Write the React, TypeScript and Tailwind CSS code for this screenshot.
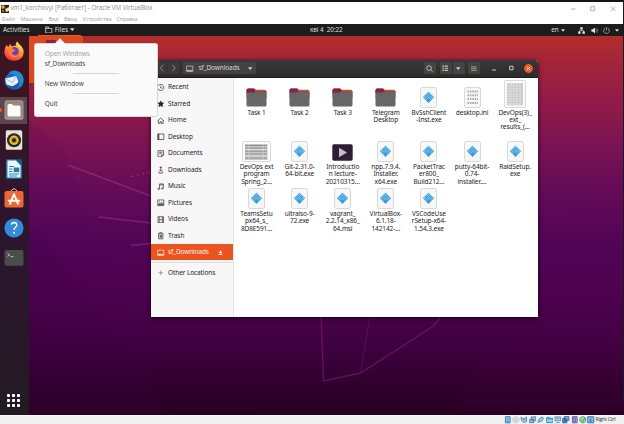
import type { ReactNode } from "react";

const UI = "font-['Noto_Sans','Open_Sans',sans-serif]";

function Caret({ className = "h-[3.2px] w-[5px]" }: { className?: string }) {
  return (
    <svg viewBox="0 0 6 4" className={`shrink-0 ${className}`} fill="currentColor">
      <path d="M0 .2h6L3 4z" />
    </svg>
  );
}

function HostTitle() {
  return (
    <div className="h-[24px] w-full shrink-0 border-t-2 border-[#15131a] bg-white font-['Open_Sans','Noto_Sans',sans-serif]">
      <div className="flex h-[12px] items-center pt-[1px] pl-[1px]">
        <svg viewBox="0 0 8 8" className="mt-[1px] h-[8px] w-[8px]">
          <rect width="8" height="8" fill="#2c2118" />
          <path d="M0 1l3-1 1 3-3 1z" fill="#e9a13a" />
          <path d="M4 4l4-2v4L5 7z" fill="#f2d9a2" />
          <path d="M1 5h2v2H1z" fill="#b5682a" />
        </svg>
        <span className="ml-[1.5px] text-[6.2px] leading-none tracking-[0px] whitespace-pre text-[#8d8d8d]">
          vm1_korchovyi [Работает] - Oracle VM VirtualBox
        </span>
        <svg viewBox="0 0 48 8" className="mr-[7px] ml-auto h-[8px] w-[48px]" fill="none" stroke="#929292" strokeWidth=".7">
          <path d="M2 4h4.500M21.700 1.700h4v4h-4zM42 1.500l4.500 4.500M46.500 1.500l-4.500 4.500" />
        </svg>
      </div>
      <div className="flex h-[10px] items-center gap-[7px] pt-[1px] pl-[1.5px] text-[5.4px] leading-none tracking-[-0.05px] text-[#a0a0a0]">
        <span className="w-[12px]">Файл</span>
        <span className="w-[21px]">Машина</span>
        <span className="w-[8.5px]">Вид</span>
        <span className="w-[11.5px]">Ввод</span>
        <span className="w-[27px]">Устройства</span>
        <span className="tracking-[-0.15px]">Справка</span>
      </div>
    </div>
  );
}

function TopBar() {
  return (
    <div className="flex h-[12px] w-full shrink-0 items-stretch bg-[#1c1c1c] text-[6.4px] leading-[12px] text-[#dedede]">
      <span className="w-[38px] pl-[3px] tracking-[-0.02px]">Activities</span>
      <div className="flex w-[43px] items-center border-b border-[#e95420] pl-[7px]">
        <svg viewBox="0 0 8 8" className="h-[7.5px] w-[7.5px]" fill="none" stroke="#dedede" strokeWidth=".8">
          <path d="M.7 1h3v1.600h3.600v4.800H.7zM.7 2.600h3" />
        </svg>
        <span className="ml-[2.3px]">Files</span>
        <Caret className="ml-[2.2px] h-[3.2px] w-[4.5px]" />
      </div>
      <span className="ml-[229px] w-[40px] tracking-[-0.08px] whitespace-pre">кві 4  20:22</span>
      <div className="mr-[5.5px] ml-auto flex items-center">
        <span className="text-[6.4px] tracking-[-0.1px]">en</span>
        <Caret className="ml-[2px] h-[3px] w-[4px]" />
        <svg viewBox="0 0 8 8" className="ml-[13px] h-[7px] w-[7px]" fill="#e2e2e2" stroke="#e2e2e2" strokeWidth=".7">
          <path d="M3 .5h2v2H3zM.5 5.500h2v2h-2zM5.500 5.500h2v2h-2z" />
          <path d="M4 2v2.200M1.500 6V4.200h5V6" fill="none" />
        </svg>
        <svg viewBox="0 0 8 8" className="ml-[6px] h-[7px] w-[7px]" fill="#e2e2e2">
          <path d="M.5 2.700h1.700L4.600.6v6.800L2.200 5.300H.5z" />
          <path d="M5.500 2.300q1.300 1.700 0 3.400M6.500 1.200q2 2.800 0 5.600" fill="none" stroke="#999" strokeWidth=".7" />
        </svg>
        <svg viewBox="0 0 8 8" className="ml-[5px] h-[7px] w-[7px]" fill="none" stroke="#c5c5c5" strokeWidth=".8">
          <path d="M2.600 1.200a3.200 3.200 0 1 0 2.800 0M4 .3v3.500" />
        </svg>
        <Caret className="ml-[5px] h-[3px] w-[4px]" />
      </div>
    </div>
  );
}

function Wallpaper() {
  return (
    <svg viewBox="0 36 624 379" preserveAspectRatio="none" className="absolute inset-0 h-full w-full">
      <defs>
        <linearGradient id="wall" x1="0" y1="0" x2="0" y2="1">
          <stop offset="0" stopColor="#b22d2a" />
          <stop offset=".07" stopColor="#a3243a" />
          <stop offset=".16" stopColor="#941d47" />
          <stop offset=".28" stopColor="#7d1452" />
          <stop offset=".4" stopColor="#650c58" />
          <stop offset=".55" stopColor="#500555" />
          <stop offset=".68" stopColor="#4c034e" />
          <stop offset=".8" stopColor="#410142" />
          <stop offset=".92" stopColor="#30002f" />
          <stop offset="1" stopColor="#280020" />
        </linearGradient>
      </defs>
      <rect y="36" width="624" height="379" fill="url(#wall)" />
      <path d="M29 120l33 25 55 145 50 125H29z" fill="#4a0058" opacity=".1" />
      <path d="M29 220l150 195H29z" fill="#300030" opacity=".08" />
      <path d="M538 260l86-110v265H450z" fill="#700060" opacity=".05" />
      <g fill="none" stroke="#a03a86" opacity=".5">
        <path d="M68 165l83 31" strokeWidth="1.800" />
        <path d="M99 217l52 6M131 245.500l20-2" strokeWidth="1.600" />
        <path d="M321 316l2.500 65 37-8 73-47 8-10" stroke="#91207f" strokeWidth="1.400" />
        <path d="M370 316l-9.500 57" stroke="#91207f" strokeWidth=".7" />
      </g>
      <g fill="#b65f9f" opacity=".8">
        <circle cx="131.500" cy="176.200" r=".8" />
        <circle cx="137.500" cy="174.900" r=".7" />
        <circle cx="143.500" cy="173.600" r=".7" />
        <circle cx="149" cy="172.400" r=".7" />
      </g>
    </svg>
  );
}

function DockSlot({ children, active }: { children: ReactNode; active?: boolean }) {
  return (
    <div className={`relative flex h-[27px] w-[27px] items-center justify-center ${active ? "bg-white/20" : ""}`}>
      {active && <span className="absolute top-[11.5px] -left-[1.5px] h-[3.5px] w-[3.5px] rounded-full bg-[#e95420]" />}
      {children}
    </div>
  );
}

function Dock() {
  return (
    <div className="relative flex h-full w-[29px] shrink-0 flex-col gap-[2.7px] bg-gradient-to-b from-[#3d151d] via-[#2d1530] to-[#221a22] pt-[1.2px]">
      <DockSlot>
        <svg viewBox="0 0 20 20" className="h-[20px] w-[20px]">
          <defs>
            <linearGradient id="fox" x1=".8" y1="0" x2=".3" y2="1">
              <stop offset="0" stopColor="#ffe34d" />
              <stop offset=".45" stopColor="#ff9630" />
              <stop offset="1" stopColor="#f5284e" />
            </linearGradient>
          </defs>
          <path d="M2.600 4l1.800 2 2-3.500.6 2.800Q9 4.500 11.500 5 11 2 13.500.3q.5 2.200 2.500 3.700 3.800 3 3.700 7.500-.5 7.500-9 8.300Q1.500 20 .3 11.500.2 7 2.600 4z" fill="url(#fox)" />
          <circle cx="10.200" cy="10.500" r="4.500" fill="#7139c6" />
          <path d="M4 8q3-2.500 6 .5l1.500 1.300-3 1.200q-1 2.400 1.800 3.300 2.700.4 4.600-1.800-.7 4-4.800 4.300Q4.500 16.500 4 8z" fill="#ff7b2e" />
          <path d="M13 4q4 2.500 4 7 1.500-4-1.500-7.500z" fill="#ffd94a" />
        </svg>
      </DockSlot>
      <DockSlot>
        <svg viewBox="0 0 20 20" className="h-[20px] w-[20px]">
          <path d="M6 1.500q6-2.500 10.500 2Q20 7 19.700 12q-1.500 7-8 7.500-8 .5-11-6Q0 7 4.500 3.500z" fill="#1769ba" />
          <path d="M5 3q2-2.600 6-2.500 8 1 8.500 9-1 6-5 8 2-6-1-10Q10 3.500 5 3z" fill="#2b87d3" />
          <path d="M1 8.500L12 6l3 6.500-6.500 4-6-2z" fill="#e7f0f8" />
          <path d="M1.200 8.800l7.500 3.700L12.200 6.500" fill="none" stroke="#9fb9d6" strokeWidth=".9" />
          <path d="M1.500 14q4.500 3.500 9 1.500 4-2 5-6 1 8-5 9.500-6 1-9-5z" fill="#1e5aa5" />
        </svg>
      </DockSlot>
      <DockSlot active>
        <svg viewBox="0 0 20 20" className="h-[20px] w-[20px]">
          <rect x=".5" y=".3" width="19" height="19.400" rx="2.500" fill="#a49d8d" />
          <rect x="1.300" y="1" width="17.400" height="16.500" rx="2" fill="#938c7d" />
          <path d="M3.500 5.500q0-1.500 1.500-1.500h3l1 1.400h6q1.500 0 1.500 1.500V15q0 1.500-1.500 1.500H5q-1.500 0-1.500-1.500z" fill="#fbfaf5" />
        </svg>
      </DockSlot>
      <DockSlot>
        <svg viewBox="0 0 18 20" className="h-[20px] w-[18px]">
          <rect x=".8" y=".2" width="16.400" height="19.600" rx="1.600" fill="#e9e3d9" />
          <circle cx="9" cy="10.200" r="7" fill="#272727" />
          <circle cx="9" cy="10.200" r="4.700" fill="#f4c62e" />
          <circle cx="9" cy="10.200" r="3.200" fill="#c99b1d" />
          <circle cx="9" cy="10.200" r="2" fill="#222" />
        </svg>
      </DockSlot>
      <DockSlot>
        <svg viewBox="0 0 18 20" className="h-[20px] w-[18px]">
          <path d="M2 .3h9.500L17 6v12.500q0 1.200-1.200 1.200H2.200Q1 19.700 1 18.500V1.500Q1 .3 2 .3z" fill="#1a75a8" />
          <path d="M2.500 1.500H11l4.500 5v12h-13z" fill="#eff8fc" />
          <path d="M11 .2h6V6z" fill="#165b83" />
          <path d="M4 7.500h5M4 10h3.500M4 12.500h3.500M4 15h10M4 17h8" stroke="#2685b5" strokeWidth="1.100" />
          <rect x="8.700" y="8.500" width="5.500" height="4.700" fill="#2579a5" />
        </svg>
      </DockSlot>
      <DockSlot>
        <svg viewBox="0 0 20 20" className="-mt-[2px] h-[20px] w-[20px]">
          <path d="M7 4.500V3q3-4.500 6 0v1.500" fill="none" stroke="#e3d7cb" strokeWidth="1" />
          <rect x=".5" y="3" width="19" height="16.500" rx="2" fill="#ee6634" />
          <path d="M6 15.800l4-9.800 4 9.800M4.700 12.800h10.600" fill="none" stroke="#fff" strokeWidth="1.900" strokeLinecap="round" strokeLinejoin="round" />
        </svg>
      </DockSlot>
      <DockSlot>
        <svg viewBox="0 0 20 20" className="-mt-[1px] h-[20px] w-[20px]">
          <circle cx="10" cy="10" r="9.600" fill="#338cd5" />
          <path d="M7.300 6.700q.3-2.200 2.900-2.200 2.500.2 2.600 2.300 0 1.500-1.500 2.600-1.200.9-1.200 2.600" fill="none" stroke="#fff" strokeWidth="1.300" />
          <circle cx="10.100" cy="14.800" r=".95" fill="#fff" />
        </svg>
      </DockSlot>
      <DockSlot>
        <svg viewBox="0 0 20 16" className="-mt-[1px] h-[16px] w-[20px]">
          <rect x=".5" width="19" height="15.800" rx="1.800" fill="#4c4d4b" />
          <path d="M3.500 3.500l2.200 1.400-2.200 1.400M6.500 6.700h3" fill="none" stroke="#ddd" strokeWidth=".8" />
        </svg>
      </DockSlot>
      <div className="mt-auto mb-[7.8px] ml-[6.8px] grid w-[13.4px] grid-cols-3 gap-[2.3px]">
        {Array.from({ length: 9 }, (_, i) => (
          <span key={i} className="h-[2.9px] w-[2.9px] rounded-[0.8px] bg-white" />
        ))}
      </div>
    </div>
  );
}

function SideIcon({ d, filled }: { d: string; filled?: boolean }) {
  return (
    <svg viewBox="0 0 8 8" className="h-[7.5px] w-[7.5px] shrink-0" fill={filled ? "currentColor" : "none"} stroke="currentColor" strokeWidth=".7">
      <path d={d} />
    </svg>
  );
}

const places: { name: string; d: string; filled?: boolean }[] = [
  { name: "Recent", d: "M1.500 1.600A3.300 3.300 0 1 1 .7 4M.7 2l1-.8M4 2v2.300h1.700" },
  { name: "Starred", d: "M4 1l.9 2 2.200.3-1.600 1.500.4 2.200L4 6 2.100 7l.4-2.200L.9 3.300 3.100 3z", filled: true },
  { name: "Home", d: "M.6 4.200L4 .9l3.400 3.300M1.500 3.500v3.700h1.700V5h1.600v2.200h1.700V3.500" },
  { name: "Desktop", d: "M.7 1h6.600v6H.7zM1.600 1v6M2 1v6" },
  { name: "Documents", d: "M1 .7h6v4.600L5.200 7.300H1zM2.300 2.400h3.400M2.300 4h3M7 5.200H5v2" },
  { name: "Downloads", d: "M4 .5v4.800M2.300 3.800L4 5.500l1.700-1.700M2.200 5.800v1.700h3.600V5.800M2.700 1.500h2.600" },
  { name: "Music", d: "M2.700 6V1h4v4.500M2.700 2h4M2.700 6q0 1-1 1t-1-.7 2-.7M6.700 5.500q0 1-1 1t-1-.7 2-.7" },
  { name: "Pictures", d: "M.8 1h6.400v6H.8zM1 6.500l2-2.300 1 .9 1.200-1.700L7 6.500M2.300 2.500h.8M2 5.600h4M1.800 6.200h4.700" },
  { name: "Videos", d: "M1 .8h6v6.400H1zM2.300.800v6.400M5.700.800v6.400M2.300 4h3.400" },
  { name: "Trash", d: "M.9 2h6.200M2.800 1.900V.7h2.400v1.200M1.600 2.300l.2 5.100h4.400l.2-5.100M3.200 3.200v3M4.800 3.200v3M4 3.200v3" },
];

const driveIcon = "M.7 1.200h6.600v5.600H.7zM1 5.700h6M1 6.200h6";

type Kind = "folder" | "exe" | "video" | "text" | "tall" | "wide";

function FileGlyph({ kind }: { kind: Kind }) {
  if (kind === "folder")
    return (
      <svg viewBox="0 0 21 19" className="h-[19px] w-[21px]">
        <path d="M.5 2.500Q.5.500 2 .5h6l1.300 1.300h9.200q2 0 2 2V10H.5z" fill="#d64c2d" />
        <path d="M.5 5V2.200Q.5.400 2.200.4H8l1.500 1.400-1 2.700z" fill="#87204a" />
        <path d="M.5 4.500h7.300L9.200 3.400h11.300V17q0 1.600-1.500 1.600H2q-1.500 0-1.500-1.600z" fill="#676767" />
        <path d="M.5 4.700h7.300L9.200 3.700h11.300" fill="none" stroke="#565256" strokeWidth=".5" />
      </svg>
    );
  if (kind === "video")
    return (
      <svg viewBox="0 0 21 17" className="h-[17px] w-[21px]">
        <rect x=".3" y=".3" width="20.400" height="16.400" rx="1.600" fill="#2d1d35" />
        <path d="M7 3.800l8 4.700-8 4.700z" fill="#c5bcc8" />
      </svg>
    );
  if (kind === "tall")
    return (
      <svg viewBox="0 0 22 28" className="h-[28px] w-[22px]">
        <rect x=".5" y=".5" width="21" height="27" rx="1" fill="#fbfbfb" stroke="#c9c9c9" strokeWidth=".7" />
        <rect x="3" y="3" width="16" height="22.500" fill="#d0d0d0" />
        <path d="M5 3v22.500M7 3v22.500M10 3v22.500M13 3v22.500M16 3v22.500" stroke="#f1f1f1" strokeWidth=".7" />
        <path d="M3 5h16M3 7.500h16M3 10h16M3 12.500h16M3 15h16M3 17.500h16M3 20h16M3 22.500h16" stroke="#b5b5b5" strokeWidth=".4" />
      </svg>
    );
  if (kind === "wide")
    return (
      <svg viewBox="0 0 29 21" className="h-[21px] w-[29px]">
        <rect x=".5" y=".5" width="28" height="20" rx="1.500" fill="#fcfcfc" stroke="#c9c9c9" strokeWidth=".7" />
        <rect x="3" y="3" width="22.500" height="16" fill="#c6c6c6" />
        <path d="M3 4.500h22M3 7h22M3 10.200h22M3 13h22M3 17h22" stroke="#888" strokeWidth=".9" />
        <path d="M3 8.600h22M3 15h22" stroke="#e6e6e6" strokeWidth=".8" />
        <path d="M7 3v16M21 3v16" stroke="#e2e2e2" strokeWidth=".5" />
      </svg>
    );
  return (
    <svg viewBox="0 0 17 21" className="h-[21px] w-[17px]">
      <rect x=".5" y=".5" width="16" height="20" rx="1.800" fill="#f7f7f7" stroke="#cfcfcf" strokeWidth=".8" />
      {kind === "exe" ? (
        <g>
          <path d="M8.500 4.700l5.500 5.600-5.500 5.600L3 10.300z" fill="#3c9bd7" />
          <path d="M8.500 4.700l2 2-2 2-2-2zM5 8.300l2 2-2 2-2-2zM12 8.300l2 2-2 2-2-2z" fill="#64b9e8" />
          <path d="M5.700 7.600l5.600 5.500M11.300 7.600l-5.600 5.500" stroke="#b5dcf2" strokeWidth=".55" />
        </g>
      ) : (
        <g fill="none" stroke="#a6a6a6" strokeWidth="2" strokeDasharray="1.500 .9">
          <path d="M3.500 4.500h10.500M3.500 8.300h10.500M3.500 12.100h10.500M3.500 15.900h10.500" />
        </g>
      )}
    </svg>
  );
}

const rows: { className: string; box: string; files: { kind: Kind; lines: string[] }[] }[] = [
  {
    className: "h-[61px]",
    box: "h-[28.7px]",
    files: [
      { kind: "folder", lines: ["Task 1"] },
      { kind: "folder", lines: ["Task 2"] },
      { kind: "folder", lines: ["Task 3"] },
      { kind: "folder", lines: ["Telegram", "Desktop"] },
      { kind: "exe", lines: ["BvSshClient", "-Inst.exe"] },
      { kind: "text", lines: ["desktop.ini"] },
      { kind: "tall", lines: ["DevOps(3)_", "ext_", "results_(…"] },
    ],
  },
  {
    className: "h-[47px]",
    box: "h-[22px]",
    files: [
      { kind: "wide", lines: ["DevOps ext", "program", "Spring_2…"] },
      { kind: "exe", lines: ["Git-2.31.0-", "64-bit.exe"] },
      { kind: "video", lines: ["Introductio", "n lecture-", "20210315…"] },
      { kind: "exe", lines: ["npp.7.9.4.", "Installer.", "x64.exe"] },
      { kind: "exe", lines: ["PacketTrac", "er800_", "Build212…"] },
      { kind: "exe", lines: ["putty-64bit-", "0.74-", "installer.…"] },
      { kind: "exe", lines: ["RaidSetup.", "exe"] },
    ],
  },
  {
    className: "h-[47px]",
    box: "h-[22px]",
    files: [
      { kind: "exe", lines: ["TeamsSetu", "px64_s_", "8D8E591…"] },
      { kind: "exe", lines: ["ultraiso-9-", "72.exe"] },
      { kind: "exe", lines: ["vagrant_", "2.2.14_x86_", "64.msi"] },
      { kind: "exe", lines: ["VirtualBox-", "6.1.18-", "142142-…"] },
      { kind: "exe", lines: ["VSCodeUse", "rSetup-x64-", "1.54.3.exe"] },
    ],
  },
];

function glyphOffset(row: number, kind: Kind) {
  if (row === 0 && kind === "folder") return "pt-[8px]";
  if (row === 0 && kind !== "tall") return "pt-[7px]";
  if (kind === "video") return "pt-[3px]";
  return "pt-0";
}

function FilesWindow() {
  return (
    <div className="absolute top-[24px] left-[151px] flex h-[256.5px] w-[387px] flex-col overflow-hidden rounded-t-[3px] bg-white shadow-[0_1px_5px_rgba(0,0,0,0.7)]">
      <div className="flex h-[17.5px] shrink-0 items-center border-b border-[#1d1c1c] bg-gradient-to-b from-[#393737] to-[#2d2b2b] text-[#d6d6d6]">
        <div className="ml-[2px] flex h-[12px] w-[25.5px] items-center justify-around rounded-[1px] bg-[#3b3939]">
          <svg viewBox="0 0 24 8" className="h-[8px] w-[24px]" fill="none" stroke="#9b9999" strokeWidth=".8">
            <path d="M9 .8L6.500 4 9 7.200M18.500.800L21 4l-2.500 3.200" />
            <path d="M13 -2v12" stroke="#2c2a2a" />
          </svg>
        </div>
        <div className="ml-[4.5px] flex h-[12px] w-[73px] items-center rounded-[1px] bg-[#454242] pl-[3px] text-[6.5px] leading-none">
          <SideIcon d={driveIcon} />
          <span className="ml-[5px] tracking-[-0.1px]">sf_Downloads</span>
          <Caret className="mr-[4px] ml-auto h-[3px] w-[4.5px]" />
        </div>
        <div className="mr-[5.5px] ml-auto flex items-center">
          <div className="flex h-[12px] w-[12.5px] items-center justify-center rounded-[1px] bg-[#454242]">
            <svg viewBox="0 0 8 8" className="h-[7px] w-[7px]" fill="none" stroke="#d5d5d5" strokeWidth=".9">
              <circle cx="3.500" cy="3.500" r="2.700" />
              <path d="M5.500 5.500l2 2" />
            </svg>
          </div>
          <div className="ml-[3.5px] flex h-[12px] w-[25px] items-center rounded-[1px] bg-[#454242]">
            <svg viewBox="0 0 8 8" className="ml-[2.5px] h-[6.5px] w-[6.5px]" stroke="#c4c4c4" strokeWidth="1.300">
              <path d="M.5 1.400h2M.5 4h2M.5 6.600h2M3.300 1.400h4M3.300 4h4M3.300 6.600h4" />
            </svg>
            <span className="ml-[3px] h-full w-px bg-[#302e2e]" />
            <Caret className="ml-[3px] h-[3px] w-[4.5px]" />
          </div>
          <div className="ml-[3.5px] flex h-[12px] w-[12px] items-center justify-center rounded-[1px] bg-[#454242]">
            <svg viewBox="0 0 6 6" className="h-[5.5px] w-[5.5px]" stroke="#bdbdbd" strokeWidth=".8">
              <path d="M0 1h6M0 3h6M0 5h6" />
            </svg>
          </div>
          <svg viewBox="0 0 24 8" className="ml-[10.5px] h-[8px] w-[24px]" fill="none" stroke="#dcdcdc" strokeWidth=".9">
            <path d="M1 6h4M18.700 2.200h3.300v3.500h-3.300z" />
          </svg>
          <svg viewBox="0 0 10 10" className="ml-[9px] h-[9px] w-[9px]">
            <circle cx="5" cy="5" r="4.900" fill="#ed5b2a" />
            <path d="M3.200 3.200l3.600 3.600M6.800 3.200L3.200 6.800" stroke="#fff" strokeWidth=".9" />
          </svg>
        </div>
      </div>
      <div className="flex min-h-0 flex-1">
        <div className="w-[82.5px] shrink-0 border-r border-[#e4e4e4] bg-[#f7f7f7] text-[6.5px] leading-none tracking-[-0.05px] text-[#262626]">
          <div className="pt-[1.7px]">
            {places.map((p) => (
              <div key={p.name} className="flex h-[16.5px] items-center pl-[6px]">
                <SideIcon d={p.d} filled={p.filled} />
                <span className="ml-[3.5px]">{p.name}</span>
              </div>
            ))}
          </div>
          <div className="flex h-[16px] items-center bg-[#e95420] pt-[0.5px] pl-[6px] text-white/90">
            <SideIcon d={driveIcon} />
            <span className="ml-[3.5px] tracking-[-0.12px]">sf_Downloads</span>
            <svg viewBox="0 0 6 6" className="mr-[9.5px] ml-auto h-[5px] w-[5px]" fill="#fff">
              <path d="M3 .3L5.300 4H.7zM.7 4.700h4.600v1H.7z" />
            </svg>
          </div>
          <div className="mt-[1.5px] h-px bg-[#ecd9d0]" />
          <div className="mt-[2px] flex h-[16.5px] items-center pl-[6px]">
            <span className="text-[#777]">
              <SideIcon d="M1.500 4h5M4 1.500v5" />
            </span>
            <span className="ml-[3.5px] tracking-[-0.1px]">Other Locations</span>
          </div>
        </div>
        <div className="flex flex-1 flex-col pt-[2.5px] pl-[1.5px]">
          {rows.map((row, i) => (
            <div key={i} className={`flex ${row.className}`}>
              {row.files.map((f) => (
                <div key={f.lines[0]} className="flex w-[43.1px] shrink-0 flex-col items-center">
                  <div className={`flex shrink-0 flex-col items-center ${row.box} ${glyphOffset(i, f.kind)}`}>
                    <FileGlyph kind={f.kind} />
                  </div>
                  {f.lines.map((l) => (
                    <span key={l} className="h-[7.4px] text-[6.5px] leading-[7.4px] tracking-[-0.1px] whitespace-pre text-[#1c1c1c]">
                      {l}
                    </span>
                  ))}
                </div>
              ))}
            </div>
          ))}
        </div>
      </div>
    </div>
  );
}

function AppMenu() {
  return (
    <div className="absolute top-[6.5px] left-[34px] h-[74px] w-[124px] rounded-[2.5px] border border-[#d9d4d4] bg-[#fafafa] px-[9.8px] pt-[5.4px] text-[6.4px] leading-[10px] tracking-[-0.03px] text-[#454545]">
      <svg viewBox="0 0 14 7" className="absolute -top-[6px] left-[18px] h-[7px] w-[14px]" fill="#fafafa">
        <path d="M7 .3l6.500 6.700H.5z" />
      </svg>
      <div className="text-[#a5a5a5]">Open Windows</div>
      <div className="tracking-[-0.1px]">sf_Downloads</div>
      <div className="mx-auto mt-[3.8px] h-px w-[46px] bg-[#d6d6d6]" />
      <div className="mt-[5px]">New Window</div>
      <div className="mx-auto mt-[4.5px] h-px w-[46px] bg-[#d6d6d6]" />
      <div className="mt-[5px]">Quit</div>
    </div>
  );
}

const statusIcons: { d: string; c: string }[] = [
  { d: "M1.500.700h5v6.600h-5zM2.500 5.500h3M4 2v2", c: "#2f80c2" },
  { d: "M4 .8a3.200 3.200 0 1 0 .1 0M4 3a1 1 0 1 0 .1 0", c: "#c3c3c3" },
  { d: "M1 1.500l3 1.500 3-2v5L4 7 2 5.500zM3 4h3", c: "#4a91bd" },
  { d: "M2.500 1h5v3.500h-5zM.700 3.500h4.500V7H.7z", c: "#397caa" },
  { d: "M1 6.500L2.500 3l3-2L7 2.500l-2 3z", c: "#368bc4" },
  { d: "M.7 1.500h3l.7 1h3V7H.7zM.7 3h6.700", c: "#238fd1" },
  { d: "M1 1h6v4H1zM2 7h4M2.500 2.500h3", c: "#5797bd" },
  { d: "M2.500.700h4.800v4H2.500zM.700 2.700h4.500v4.500H.7zM2 4h2v2H2z", c: "#275eab" },
  { d: "M1.500.700h5v6.600h-5zM3 2h2v4H3z", c: "#6256aa" },
  { d: "M4 .7a3.300 3.300 0 1 0 .1 0M2.500 4l1.500 2 2.500-4", c: "#35a45a" },
  { d: "M.8.800h6.400v6.400H.8zM4 2v4M2.500 4.500L4 6l1.500-1.500", c: "#176fb3" },
];

function StatusBar() {
  return (
    <div className="flex h-[9px] w-full shrink-0 items-center justify-end border-t border-[#fafafa] bg-[#f0f0f0]">
      <div className="flex w-[91.3px] justify-between">
        {statusIcons.map((s, i) => (
          <svg key={i} viewBox="0 0 8 8" className="h-[7.5px] w-[7.5px]" fill={s.c} fillOpacity=".35" stroke={s.c} strokeWidth="1">
            <path d={s.d} />
          </svg>
        ))}
      </div>
      <span className="mr-[5px] ml-[0.5px] w-[23.500px] font-['Open_Sans',sans-serif] text-[5.300px] leading-none tracking-[-0.300px] whitespace-nowrap text-[#333]">
        Right Ctrl
      </span>
    </div>
  );
}

export default function App() {
  return (
    <div className={`relative flex h-[424px] w-[624px] flex-col overflow-hidden bg-white ${UI}`}>
      <HostTitle />
      <TopBar />
      <div className="relative flex h-[379px] shrink-0 overflow-hidden">
        <Wallpaper />
        <Dock />
        <div className="absolute top-0 left-[29px] h-[47px] w-[54px] rounded-br-[1px] bg-[#dc4a20]">
          <span className="absolute top-[4px] left-[17px] h-[6px] w-[10px] rounded-[1px] bg-[#8b2052]" />
        </div>
        <FilesWindow />
        <AppMenu />
      </div>
      <StatusBar />
      <span className="absolute top-0 right-0 h-[400px] w-px bg-[#1a1a22]" />
    </div>
  );
}
